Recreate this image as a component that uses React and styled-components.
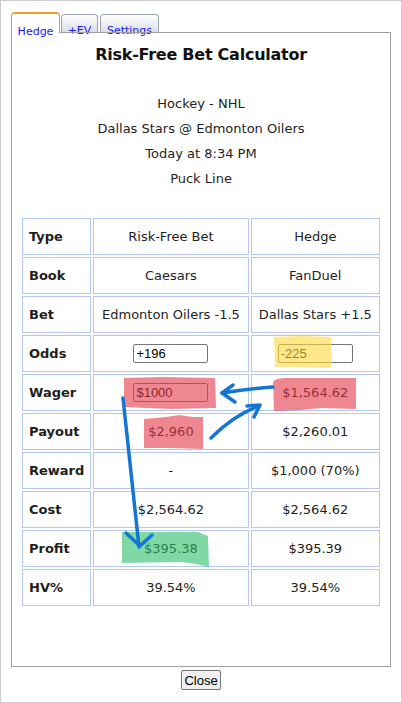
import React from "react";
import styled, { createGlobalStyle } from "styled-components";

const GlobalStyle = createGlobalStyle`
  html, body {
    margin: 0;
    padding: 0;
    background: #ffffff;
  }
`;

const Frame = styled.div`
  position: relative;
  width: 402px;
  height: 703px;
  box-sizing: border-box;
  border: 1px solid #cccccc;
  padding: 11px 10px 0;
  font-family: "DejaVu Sans", Verdana, sans-serif;
  color: #1e1e1e;
`;

const TabBar = styled.div`
  display: flex;
  align-items: flex-end;
  gap: 1px;
  height: 21px;
`;

const Tab = styled.div`
  position: relative;
  z-index: ${({ active }) => (active ? 2 : 0)};
  box-sizing: border-box;
  width: ${({ w }) => w}px;
  margin-left: ${({ ml }) => ml || 0}px;
  height: ${({ active }) => (active ? 21 : 19)}px;
  padding-top: ${({ active }) => (active ? 11 : 9)}px;
  border: 1px solid #9aa6b6;
  border-bottom: none;
  border-top: ${({ active }) => (active ? "2px solid #f0a22a" : "1px solid #9aa6b6")};
  border-radius: 4px 4px 0 0;
  background: ${({ active }) =>
    active ? "#ffffff" : "linear-gradient(#ffffff, #d9dce8)"};
  font-size: 11px;
  line-height: 13px;
  text-align: center;
  color: #1a1aee;
  white-space: nowrap;
`;

const Panel = styled.div`
  position: relative;
  z-index: 1;
  margin-top: -1px;
  height: 635px;
  box-sizing: border-box;
  border: 1px solid #a0a0a0;
  padding: 0 8px;
`;

const Title = styled.h3`
  margin: 11px 0 0;
  font-size: 16px;
  line-height: 22px;
  letter-spacing: -0.25px;
  font-weight: bold;
  text-align: center;
  color: #111;
`;

const Info = styled.div`
  margin: 25px 0 0;
  font-size: 13px;
  line-height: 25px;
  text-align: center;
`;

const Table = styled.table`
  margin-top: 25px;
  width: 100%;
  border-spacing: 2px;
  font-size: 13px;
`;

const Cell = styled.td`
  height: 35px;
  padding: 0 6px;
  border: 1px solid #b3c7ef;
  text-align: ${({ label }) => (label ? "left" : "center")};
  font-weight: ${({ label }) => (label ? "bold" : "normal")};
  width: ${({ w }) => w}px;
  white-space: nowrap;
`;

const Input = styled.input`
  box-sizing: border-box;
  width: 75px;
  height: 19px;
  margin: 0;
  padding: 0 2px;
  border: 1px solid #767676;
  border-radius: 2px;
  font-family: "Liberation Sans", Arial, sans-serif;
  font-size: 13px;
  color: #000;
  background: #fff;
  vertical-align: middle;
`;

const Footer = styled.div`
  display: flex;
  justify-content: center;
  margin-top: 3px;
`;

const CloseButton = styled.button`
  height: 20px;
  padding: 0 2px;
  border: 1px solid #767676;
  border-radius: 2px;
  background: #efefef;
  font-family: "Liberation Sans", Arial, sans-serif;
  font-size: 13px;
  color: #000;
`;

const Annotations = styled.svg`
  position: absolute;
  left: 0;
  top: 0;
  z-index: 5;
  pointer-events: none;
`;

const rows = [
  { label: "Type", a: "Risk-Free Bet", b: "Hedge" },
  { label: "Book", a: "Caesars", b: "FanDuel" },
  { label: "Bet", a: "Edmonton Oilers -1.5", b: "Dallas Stars +1.5" },
  { label: "Odds", a: <Input defaultValue="+196" />, b: <Input defaultValue="-225" /> },
  { label: "Wager", a: <Input defaultValue="$1000" />, b: "$1,564.62" },
  { label: "Payout", a: "$2,960", b: "$2,260.01" },
  { label: "Reward", a: "-", b: "$1,000 (70%)" },
  { label: "Cost", a: "$2,564.62", b: "$2,564.62" },
  { label: "Profit", a: "$395.38", b: "$395.39" },
  { label: "HV%", a: "39.54%", b: "39.54%" },
];

const Arrows = () => (
  <Annotations width="402" height="703" viewBox="0 0 402 703">
    <g opacity="0.6">
      <path d="M273 336 L300 335 L330 336 L331 362 L329 367 L300 366 L274 366 Z" fill="#ffd83d" />
      <path d="M123 377 L160 376 L214 377 L215 407 L170 408 L123 406 Z" fill="#e63949" />
      <path d="M143 418 L165 416 L178 414 L192 416 L202 416 L202 448 L170 447 L143 447 Z" fill="#e63949" />
      <path d="M272 381 Q274 377 285 377 L355 377 L355 408 L320 407 L300 409 L273 410 Z" fill="#e63949" />
      <path d="M121 531 L197 531 L207 535 L208 566 L195 563 L180 561 L121 562 Z" fill="#2bbe69" />
    </g>
    <g fill="none" stroke="#1476d2" strokeWidth="3.5" strokeLinecap="round" strokeLinejoin="round">
      <path d="M272 386 Q245 388 221 392" />
      <path d="M232 384 L221 392 L234 401" />
      <path d="M210 437 C222 425 236 413 258 405" />
      <path d="M246 405 L259 404 L253 416" />
      <path d="M122 397 L138 546" />
      <path d="M125 532 L139 545 L151 534" />
    </g>
  </Annotations>
);

export default function App() {
  return (
    <Frame>
      <GlobalStyle />
      <TabBar>
        <Tab active w={49}>Hedge</Tab>
        <Tab w={37}>+EV</Tab>
        <Tab w={59} ml={1}>Settings</Tab>
      </TabBar>
      <Panel>
        <Title>Risk-Free Bet Calculator</Title>
        <Info>
          <div>Hockey - NHL</div>
          <div>Dallas Stars @ Edmonton Oilers</div>
          <div>Today at 8:34 PM</div>
          <div>Puck Line</div>
        </Info>
        <Table>
          <tbody>
            {rows.map((r) => (
              <tr key={r.label}>
                <Cell label w={55}>{r.label}</Cell>
                <Cell w={142}>{r.a}</Cell>
                <Cell w={116}>{r.b}</Cell>
              </tr>
            ))}
          </tbody>
        </Table>
      </Panel>
      <Footer>
        <CloseButton>Close</CloseButton>
      </Footer>
      <Arrows />
    </Frame>
  );
}
